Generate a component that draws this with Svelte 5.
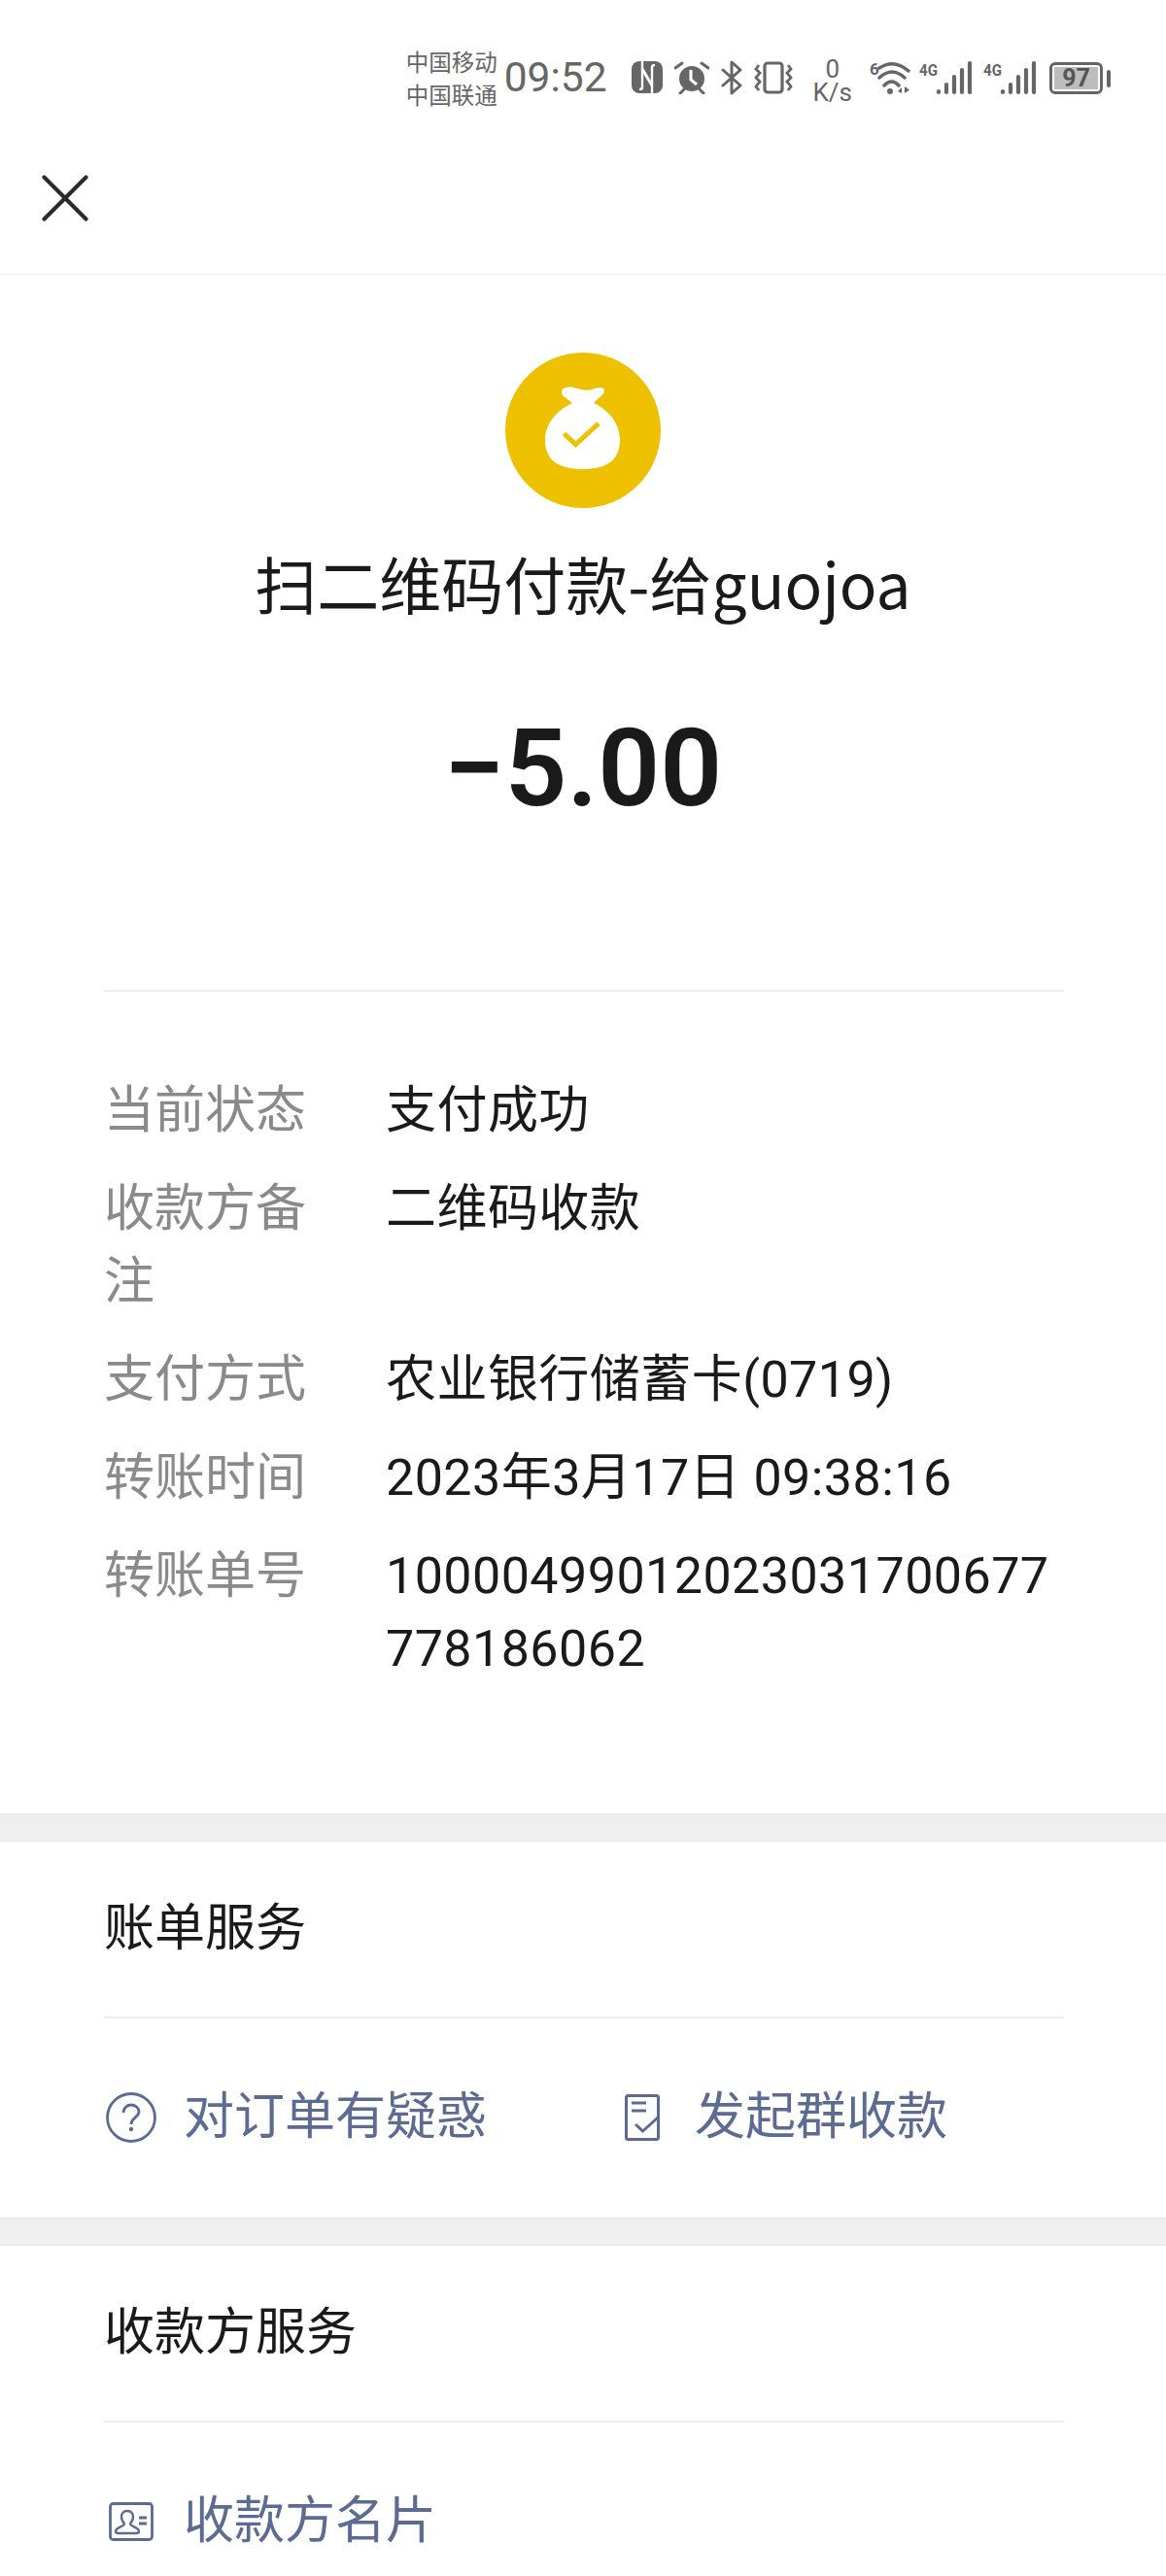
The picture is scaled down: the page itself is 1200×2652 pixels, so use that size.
<script>
  const rows = [
    { k: '当前状态', v: '支付成功' },
    { k: '收款方备注', v: '二维码收款' },
    { k: '支付方式', v: '农业银行储蓄卡(0719)' },
    { k: '转账时间', v: '2023年3月17日 09:38:16' },
    { k: '转账单号', v: '10000499012023031700677778186062' }
  ];
</script>

{#snippet signal()}
  <svg class="sig" viewBox="0 0 54 36">
    <text x="0" y="16" class="tiny" textLength="19" lengthAdjust="spacingAndGlyphs">4G</text>
    <path d="M20 32v1M28 25v8M36 17v16M44 10v23M52 3v30" stroke="#666" stroke-width="4.200" stroke-linecap="round" fill="none"/>
  </svg>
{/snippet}

<div class="page">
  <header class="status">
    <div class="carriers"><span>中国移动</span><span>中国联通</span></div>
    <div class="clock">09:52</div>
    <svg class="nfc" viewBox="0 0 32 33"><rect width="32" height="33" rx="8" fill="#666"/><path d="M11 0v27c0 2-1.500 2-3 2M21 33V6c0-2 1.500-2 3-2" fill="none" stroke="#fff" stroke-width="2.400"/><path d="M11 8l10 17" fill="none" stroke="#fff" stroke-width="3"/></svg>
    <svg class="alarm" viewBox="0 0 36 34"><circle cx="18" cy="18" r="13" fill="#666"/><path d="M17 9v10l6 5" fill="none" stroke="#fff" stroke-width="3"/><path d="M1 7l7-5M35 7l-7-5M6 33l4-4M30 33l-4-4" stroke="#666" stroke-width="3" fill="none" stroke-linecap="round"/></svg>
    <svg class="bt" viewBox="0 0 22 36"><path d="M2 10l18 16-9 8V2l9 8L2 26" fill="none" stroke="#666" stroke-width="3" stroke-linecap="round" stroke-linejoin="round"/></svg>
    <svg class="vib" viewBox="0 0 40 34"><rect x="11" y="2" width="18" height="30" rx="3" fill="none" stroke="#666" stroke-width="3.200"/><path d="M5 4L2 8l4 4-4 5 4 4-4 5 3 4M35 4l3 4-4 4 4 5-4 4 4 5-3 4" fill="none" stroke="#666" stroke-width="2.800"/></svg>
    <div class="speed"><span>0</span><span>K/s</span></div>
    <svg class="wifi" viewBox="0 0 44 36">
      <text x="0" y="15" class="tiny">6</text>
      <path d="M10 8q15-10 30 3M10 18q13-12 26 0M15 26q7.500-8 15 0" fill="none" stroke="#666" stroke-width="3.400" stroke-linecap="round"/>
      <circle cx="21" cy="32" r="3" fill="#666"/>
      <path d="M29 32l4-4v6zM36 27v7l5-3.500z" fill="#666"/>
    </svg>
    {@render signal()}
    {@render signal()}
    <div class="battery"><div class="cell"><span>97</span></div><i></i></div>
  </header>

  <nav class="topbar">
    <svg class="close" viewBox="0 0 48 48"><path d="M2.500 2.500l43 43M45.500 2.500l-43 43" stroke="#2b2b2b" stroke-width="4.200" stroke-linecap="round"/></svg>
  </nav>

  <section class="summary">
    <svg class="badge" viewBox="0 0 160 160">
      <circle cx="80" cy="80" r="80" fill="#edc100"/>
      <path d="M69 52C64 47 57 45 58 40C59 34 70 35 75 37C80 39 86 39.500 92 37C97 35 103 36 102 40C100 45 95 47 91 52C108 60 118 74 118 90C118 111 104 120 80 120C55 120 41 111 41 90C41 74 52 60 69 52Z" fill="#fff"/>
      <path d="M60.500 83.500l12 11L96 73" fill="none" stroke="#edc100" stroke-width="5"/>
    </svg>
    <h1>扫二维码付款-给guojoa</h1>
    <div class="amount">−5.00</div>
  </section>

  <section class="details">
    {#each rows as r}
      <div class="row"><div class="k">{r.k}</div><div class="v">{r.v}</div></div>
    {/each}
  </section>

  <section class="service">
    <div class="band"></div>
    <h2>账单服务</h2>
    <div class="links">
      <a class="first">
        <svg class="help" viewBox="0 0 52 52"><circle cx="26" cy="26" r="24.500" fill="none" stroke="#5b6b92" stroke-width="2.800"/><path d="M18 21c0-5 4-8 8-8s8 3 8 7c0 6-8 6-8 13" fill="none" stroke="#5b6b92" stroke-width="2.800"/><circle cx="26" cy="38" r="2.200" fill="#5b6b92"/></svg>
        <span>对订单有疑惑</span>
      </a>
      <a>
        <svg class="doc" viewBox="0 0 36 48"><rect x="1.500" y="1.500" width="33" height="45" rx="2" fill="none" stroke="#5b6b92" stroke-width="3"/><path d="M7 9h15M7 17h15M11 31l7.500 7L34 24" fill="none" stroke="#5b6b92" stroke-width="3"/></svg>
        <span>发起群收款</span>
      </a>
    </div>
  </section>

  <section class="service last">
    <div class="band"></div>
    <h2>收款方服务</h2>
    <div class="links">
      <a>
        <svg class="card" viewBox="0 0 46 40"><rect x="1.500" y="1.500" width="43" height="37" rx="3" fill="none" stroke="#5b6b92" stroke-width="2.800"/><path d="M19 9c-4 0-6 3-6 6 0 3 1 5 3 7 0 3-9 4-9 8 0 1.500 1 2 3 2h18c2 0 3-.5 3-2 0-4-9-5-9-8 2-2 3-4 3-7 0-3-2-6-6-6z" fill="none" stroke="#5b6b92" stroke-width="2.400"/><path d="M31 16h8M31 22h8" stroke="#5b6b92" stroke-width="2.800"/></svg>
        <span>收款方名片</span>
      </a>
    </div>
  </section>
</div>

<style>
  :global(body) { margin: 0; background: #fff; }
  .page { width: 1200px; height: 2652px; overflow: hidden; background: #fff; font-family: "Noto Sans CJK SC", "Noto Sans", sans-serif; color: #1a1a1a; }

  .status { height: 165px; box-sizing: border-box; padding: 46px 57px 0 0; display: flex; justify-content: flex-end; align-items: flex-start; color: #666; }
  .carriers { display: flex; flex-direction: column; font-size: 23.5px; line-height: 34px; margin-right: 7px; }
  .clock { font-family: Roboto, sans-serif; font-weight: 400; font-size: 42.5px; line-height: 68px; margin-right: 25px; }
  .nfc { width: 32px; height: 33px; margin: 17px 12px 0 0; }
  .alarm { width: 36px; height: 34px; margin: 17px 12px 0 0; }
  .bt { width: 22px; height: 36px; margin: 16px 12px 0 0; }
  .vib { width: 40px; height: 34px; margin: 17px 21px 0 0; }
  .speed { display: flex; flex-direction: column; align-items: center; font-family: Roboto, sans-serif; font-size: 26px; line-height: 24px; margin: 13px 18px 0 0; }
  .wifi { width: 44px; height: 36px; margin: 16px 7px 0 0; }
  .sig { width: 54px; height: 36px; margin: 16px 12px 0 0; }
  .tiny { font-family: Roboto, sans-serif; font-size: 17px; font-weight: 700; fill: #666; }
  .battery { display: flex; align-items: center; margin: 18px 0 0 2px; }
  .cell { width: 55px; height: 33px; box-sizing: border-box; border: 3px solid #666; border-radius: 6px; padding: 2px; display: flex; }
  .cell span { flex: 1; background: #bdbdbd; font: 700 25px/23px Roboto, sans-serif; text-align: center; color: #555; border-radius: 1px; }
  .battery i { width: 4px; height: 18px; margin-left: 4px; background: #666; border-radius: 2px; }

  .topbar { height: 118px; box-sizing: border-box; border-bottom: 1px solid #f0f0f0; padding: 15px 0 0 43px; }
  .close { width: 48px; height: 48px; display: block; }

  .summary { display: flex; flex-direction: column; align-items: center; height: 736px; box-sizing: border-box; padding-top: 80px; }
  .badge { width: 160px; height: 160px; }
  h1 { margin: 31px 0 0; font-size: 64px; line-height: 90px; font-weight: 400; color: #1a1a1a; }
  .amount { margin-top: 82px; font-family: Roboto, sans-serif; font-size: 112px; line-height: 130px; font-weight: 600; }

  .details { margin: 0 105px 0 107px; border-top: 2px solid #eee; height: 848px; box-sizing: border-box; padding-top: 85px; }
  .row { display: flex; font-size: 52px; line-height: 75px; margin-bottom: 26px; font-family: Roboto, "Noto Sans CJK SC", sans-serif; }
  .k { width: 212px; margin-right: 78px; flex: none; color: #8a8a8a; }
  .v { color: #1a1a1a; width: 700px; word-break: break-all; letter-spacing: 0.45px; }

  .service { padding: 0 105px 0 107px; height: 416px; box-sizing: border-box; }
  .service.last { height: auto; }
  .band { height: 27px; margin: 0 -105px 0 -107px; background: #efefef; border-top: 1px solid #e8e8e8; border-bottom: 1px solid #e6e6e6; }
  h2 { margin: 0; height: 182px; box-sizing: border-box; border-bottom: 2px solid #eee; font-family: Roboto, "Noto Sans CJK SC", sans-serif; font-size: 52px; line-height: 179px; font-weight: 400; color: #1a1a1a; }
  .links { display: flex; padding-top: 64px; }
  a { display: flex; align-items: center; color: #5b6b92; font-family: Roboto, "Noto Sans CJK SC", sans-serif; font-size: 52px; line-height: 75px; }
  a.first { width: 536px; }
  svg.help { width: 52px; height: 52px; margin: 0 28px 0 2px; }
  svg.doc { width: 36px; height: 48px; margin-right: 36px; }
  svg.card { width: 46px; height: 40px; margin: 0 31px 0 5px; }
</style>
